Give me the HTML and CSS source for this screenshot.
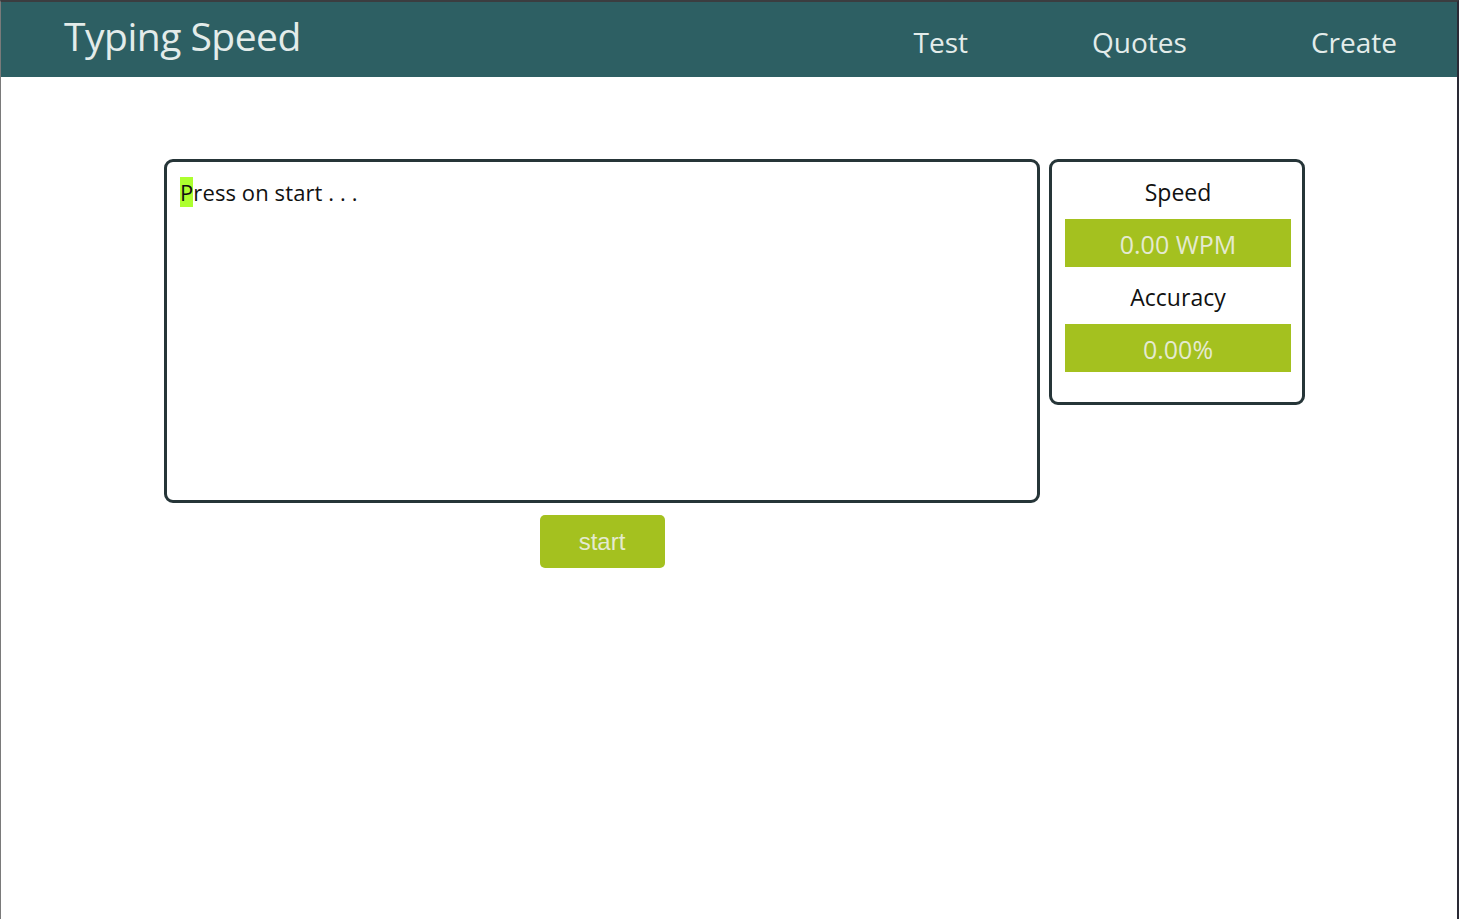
FILE: index.html
```html
<!DOCTYPE html>
<html>
<head>
<meta charset="utf-8">
<title>Typing Speed</title>
<link rel="stylesheet" href="styles.css">
</head>
<body>
<div class="frame">
  <header class="topbar">
    <div class="brand">Typing Speed</div>
    <nav class="nav">
      <a class="nav-link">Test</a>
      <a class="nav-link">Quotes</a>
      <a class="nav-link">Create</a>
    </nav>
  </header>
  <main class="content">
    <div class="left-col">
      <div class="text-box"><span class="cursor">P</span>ress on start . . .</div>
      <button class="start-btn">start</button>
    </div>
    <div class="stats">
      <div class="stat-label">Speed</div>
      <div class="stat-value">0.00 WPM</div>
      <div class="stat-label">Accuracy</div>
      <div class="stat-value">0.00%</div>
    </div>
  </main>
</div>
</body>
</html>
```
FILE: styles.css
```css
html, body {
  margin: 0;
  padding: 0;
  height: 100%;
}
body {
  font-family: "Open Sans", "Noto Sans", sans-serif;
  background: #fff;
}
.frame {
  box-sizing: border-box;
  height: 919px;
  border-top: 2px solid #3b3d40;
  border-left: 1px solid #7a7a7a;
  border-right: 2px solid #2a2a35;
  background: #fff;
}
.topbar {
  height: 75px;
  background: #2d5f63;
  display: flex;
  align-items: flex-start;
  justify-content: space-between;
  padding: 0 60px 0 63px;
}
.brand {
  color: #e3ecea;
  font-size: 39px;
  letter-spacing: -0.5px;
  line-height: 1;
  margin-top: 14px;
}
.nav {
  display: flex;
  gap: 124px;
  margin-top: 26px;
}
.nav-link {
  color: #e3ecea;
  font-size: 28px;
  line-height: 1;
}
.content {
  display: flex;
  align-items: flex-start;
  gap: 9px;
  padding: 82px 0 0 163px;
}
.left-col {
  display: flex;
  flex-direction: column;
  align-items: center;
}
.text-box {
  box-sizing: border-box;
  width: 876px;
  height: 344px;
  border: 3px solid #263538;
  border-radius: 9px;
  padding: 14px 13px;
  font-size: 22px;
  line-height: 32px;
  color: #111;
  letter-spacing: 0.1px;
}
.cursor {
  background: #adff2f;
}
.start-btn {
  margin-top: 12px;
  width: 125px;
  height: 53px;
  border: none;
  border-radius: 5px;
  background: #a4c11f;
  color: #e4ead0;
  font-family: "Liberation Sans", Arial, sans-serif;
  font-size: 24px;
  padding: 0;
}
.stats {
  box-sizing: border-box;
  width: 256px;
  height: 246px;
  border: 3px solid #263538;
  border-radius: 9px;
  padding: 14px 11px 0 13px;
  display: flex;
  flex-direction: column;
  align-items: stretch;
}
.stat-label {
  text-align: center;
  font-size: 23px;
  line-height: 32px;
  color: #111;
  height: 43px;
}
.stat-value {
  height: 48px;
  background: #a4c11f;
  color: #e4ead0;
  text-align: center;
  font-size: 25px;
  line-height: 50px;
  margin-bottom: 14px;
}
```
